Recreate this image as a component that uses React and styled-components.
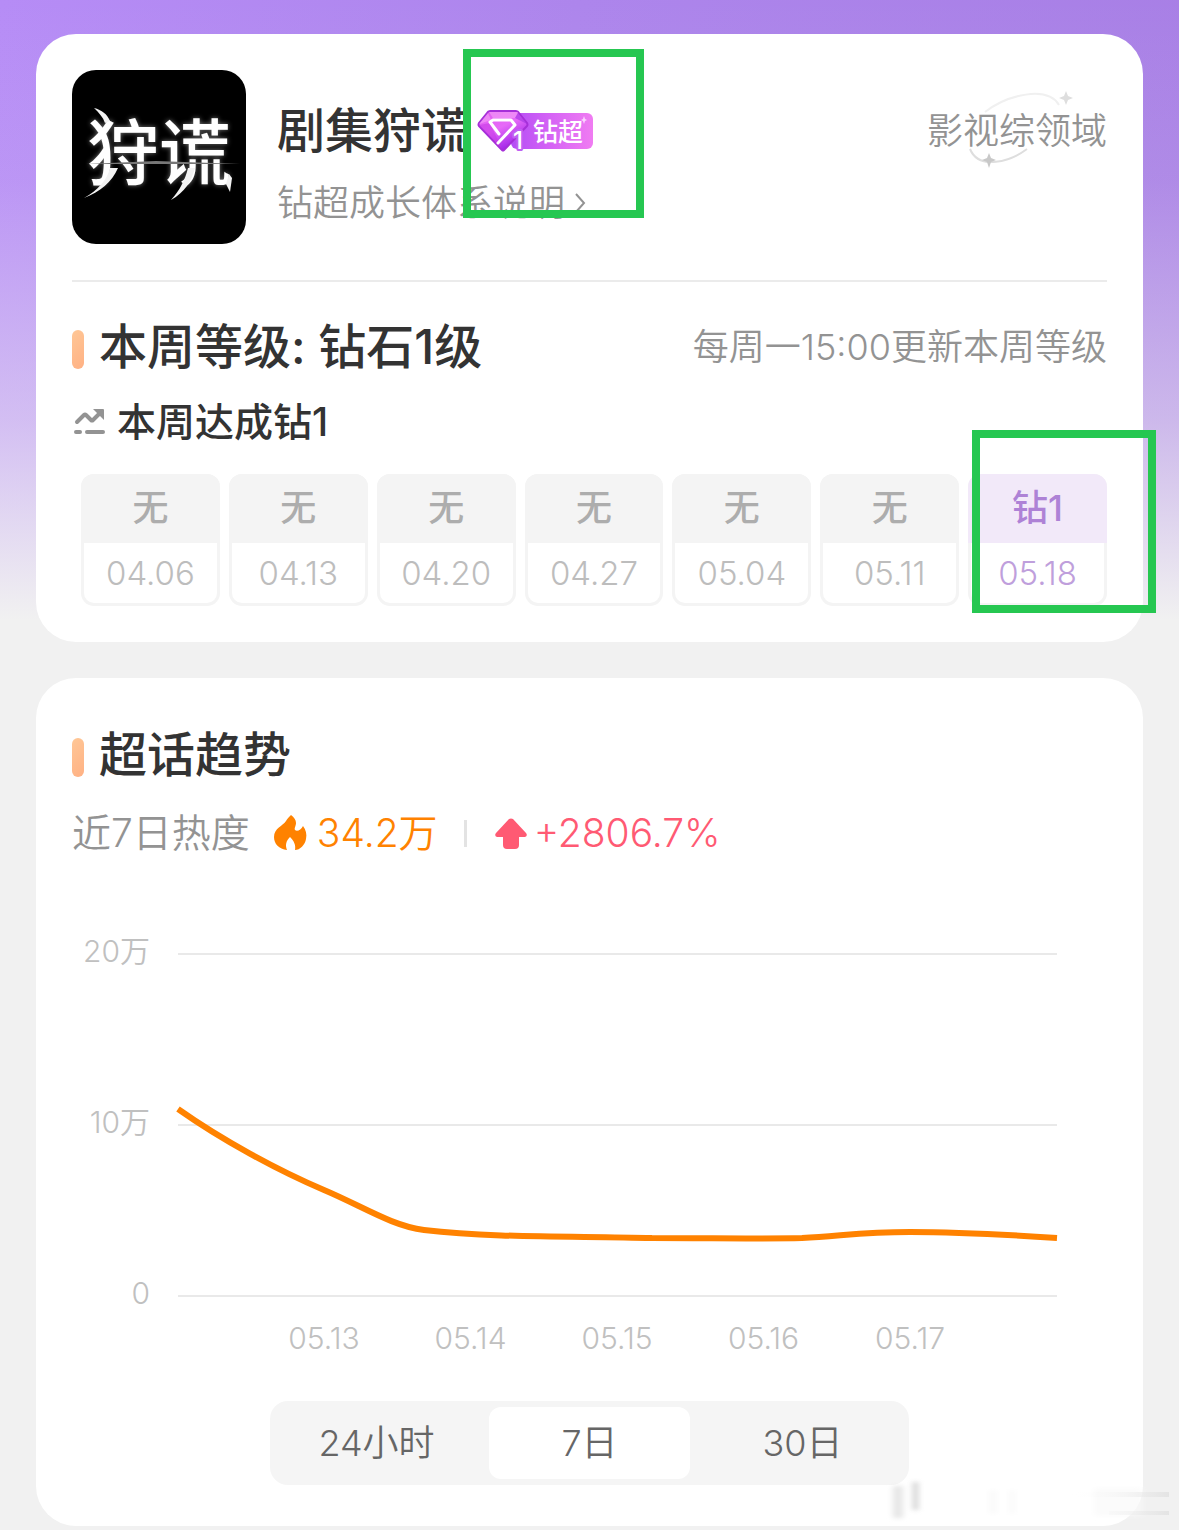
import React, { useState } from "react";
import styled, { createGlobalStyle } from "styled-components";

const GlobalStyle = createGlobalStyle`
  * {
    box-sizing: border-box;
  }
  body {
    margin: 0;
    background-color: #f1f1f1;
    font-family: Inter, "Noto Sans CJK SC", sans-serif;
    color: #333;
  }
  h1, h2, h3, p, ul {
    margin: 0;
    padding: 0;
    font-weight: 500;
  }
`;

const Page = styled.main`
  position: relative;
  display: flex;
  flex-direction: column;
  gap: 36px;
  padding: 34px 36px 4px;
  overflow: hidden;
  background:
    linear-gradient(180deg, rgba(241, 241, 241, 0) 0, rgba(241, 241, 241, 0.1) 180px, rgba(241, 241, 241, 0.5) 420px, #f1f1f1 620px),
    linear-gradient(100deg, #b68cf6 0, #ad85ec 40%, #a67de3 100%);
`;
const Card = styled.section`
  display: flex;
  flex-direction: column;
  padding: 36px;
  border-radius: 40px;
  background-color: white;
`;
const TopicHeader = styled.header`
  display: flex;
  gap: 31px;
  padding-bottom: 36px;
  border-bottom: 2px solid #ebebeb;
`;
const Cover = styled.div`
  position: relative;
  display: flex;
  align-items: center;
  justify-content: center;
  width: 174px;
  height: 174px;
  border-radius: 24px;
  background-color: black;
  color: white;
  font-size: 72px;
  line-height: 80px;
  font-weight: 500;
  text-shadow: 0 0 5px #777;
  padding-bottom: 8px;
`;
const Wisps = styled.svg`
  position: absolute;
  inset: 0;
`;
const TopicInfo = styled.div`
  display: flex;
  flex: 1;
  flex-direction: column;
  align-items: flex-start;
  gap: 12px;
  padding-top: 28px;
`;
const TitleRow = styled.div`
  display: flex;
  align-items: center;
  gap: 8px;
`;
const TopicTitle = styled.h1`
  font-size: 48px;
  line-height: 66px;
`;
const Badge = styled.span`
  position: relative;
  display: flex;
  align-items: center;
`;
const BadgeLabel = styled.span`
  height: 36px;
  margin-left: -18px;
  padding: 0 10px 0 22px;
  border-radius: 6px;
  background: linear-gradient(90deg, #b44df5, #d664f5 50%, #f07cf2);
  color: white;
  font-size: 25px;
  line-height: 38px;
  font-weight: 500;
`;
const GemIcon = styled.svg`
  position: relative;
  z-index: 1;
  overflow: visible;
`;
const BadgeSpark = styled.svg`
  position: absolute;
  top: 6px;
  right: 6px;
`;
const HelpLink = styled.a`
  display: flex;
  align-items: center;
  gap: 9px;
  color: #939393;
  font-size: 36px;
  line-height: 54px;
  font-weight: 350;
  text-decoration: none;
`;
const Field = styled.p`
  position: relative;
  align-self: flex-start;
  padding-top: 34px;
  color: #939393;
  font-size: 36px;
  line-height: 54px;
  font-weight: 350;
`;
const Orbit = styled.svg`
  position: absolute;
  top: 15px;
  left: 38px;
`;
const Highlight = styled.span`
  position: absolute;
  z-index: 2;
  inset: ${(props) => props.$inset};
  border: 8px solid #26c751;
  pointer-events: none;
`;
const HeadingRow = styled.div`
  display: flex;
  align-items: center;
  justify-content: space-between;
  padding-top: ${(props) => props.$top};
`;
const Heading = styled.h2`
  display: flex;
  align-items: center;
  gap: 15px;
  font-size: 48px;
  line-height: 66px;

  &::before {
    content: "";
    width: 12px;
    height: 39px;
    margin-top: 4px;
    border-radius: 6px;
    background: linear-gradient(135deg, #ffc796, #ffb184);
  }
`;
const Note = styled.p`
  color: #939393;
  font-size: 36px;
  line-height: 54px;
  font-weight: 350;
`;
const Reached = styled.h3`
  display: flex;
  align-items: center;
  gap: 11px;
  padding: 13px 0 23px 2px;
  font-size: 39px;
  line-height: 58px;
`;
const Weeks = styled.ul`
  display: grid;
  grid-template-columns: repeat(7, 1fr);
  gap: 9px;
  padding-left: 9px;
  list-style: none;
`;
const Week = styled.li`
  position: relative;
  border: 3px solid #f4f4f4;
  border-radius: 13px;
  color: ${(props) => (props.$active ? "#bf9fdc" : "#bdbdbd")};
  font-size: 33px;
  line-height: 60px;
  font-weight: 350;
  text-align: center;
`;
const WeekLevel = styled.div`
  margin: -3px -3px 0;
  padding-bottom: 1px;
  border-radius: 13px 13px 0 0;
  background-color: ${(props) => (props.$active ? "#f2e9f9" : "#f4f4f4")};
  color: ${(props) => (props.$active ? "#ae82d6" : "#adadad")};
  font-size: 36px;
  line-height: 68px;
  font-weight: 500;
`;
const Stats = styled.div`
  display: flex;
  align-items: center;
  padding-top: 16px;
  font-size: 39px;
  line-height: 58px;
  font-weight: 350;
`;
const StatName = styled.span`
  color: #939393;
`;
const Stat = styled.span`
  display: flex;
  align-items: center;
  gap: ${(props) => props.$gap};
  padding-left: 24px;
  color: ${(props) => props.$color};
`;
const Separator = styled.span`
  width: 3px;
  height: 27px;
  margin: 0 4px 0 26px;
  background-color: #e3e3e3;
`;
const Chart = styled.svg`
  display: block;
  width: 100%;
  margin-top: 38px;

  text {
    fill: #c0c0c0;
    font-size: 30px;
    font-weight: 350;
  }
`;
const Tabs = styled.div`
  display: flex;
  align-self: center;
  gap: 12px;
  margin: 41px 0 5px;
  padding: 6px;
  border-radius: 18px;
  background-color: #f5f5f5;
`;
const Tab = styled.button`
  width: 201px;
  padding: 0;
  border: 0;
  border-radius: 12px;
  background-color: ${(props) => (props.$active ? "white" : "transparent")};
  color: #666;
  font-family: inherit;
  font-size: 36px;
  line-height: 72px;
  font-weight: 350;
`;
const Smudge = styled.svg`
  position: absolute;
  right: 0;
  bottom: 0;
`;

const weeks = [
  { level: "无", date: "04.06" },
  { level: "无", date: "04.13" },
  { level: "无", date: "04.20" },
  { level: "无", date: "04.27" },
  { level: "无", date: "05.04" },
  { level: "无", date: "05.11" },
  { level: "钻1", date: "05.18", active: true },
];
const ranges = ["24小时", "7日", "30日"];
const gridLines = [
  { label: "20万", y: 54 },
  { label: "10万", y: 225 },
  { label: "0", y: 396 },
];
const days = ["05.13", "05.14", "05.15", "05.16", "05.17"];

const LevelBadge = () => (
  <Badge>
    <GemIcon width="52" height="42" viewBox="0 0 52 42" aria-hidden="true">
      <defs>
        <linearGradient id="gem" x1="0" y1="0" x2="0.6" y2="1">
          <stop offset="0" stopColor="#e35bf0" />
          <stop offset="0.5" stopColor="#e66af8" />
          <stop offset="1" stopColor="#9b1fe8" />
        </linearGradient>
      </defs>
      <path d="M13 1h26q2 0 3 2l8 10q1 2 0 3L27 40q-1 1-2 0L2 16q-1-1 0-3l8-10q1-2 3-2z" fill="url(#gem)" stroke="#a62fd8" strokeWidth="2" />
      <path d="M12 2l4 6h22l3-6zM2 14l12-4-3-7z" fill="#f3a0f7" opacity="0.6" />
      <path d="M50 14l-12-6 3-5z" fill="#a83be6" opacity="0.7" />
      <path d="M2 15l11-2 12 26z" fill="#c63ae6" opacity="0.6" />
      <path d="M22 24L13 12l3-2h18l4 5-17 18" fill="none" stroke="white" strokeWidth="3" strokeLinecap="round" strokeLinejoin="round" />
      <text x="36" y="39" fontSize="24" fontWeight="500" fill="white" stroke="#c060f2" strokeWidth="4" strokeLinejoin="round" paintOrder="stroke">1</text>
    </GemIcon>
    <BadgeLabel>钻超</BadgeLabel>
    <BadgeSpark width="6" height="8" viewBox="0 0 6 8" aria-hidden="true">
      <path d="M3 0l1 3 2 1-2 1-1 3-1-3-2-1 2-1z" fill="#fbd4ff" />
    </BadgeSpark>
    <Highlight $inset="-61px -51px -66px -14px" />
  </Badge>
);

const TrendIcon = () => (
  <svg width="32" height="28" viewBox="0 0 32 28" aria-hidden="true">
    <path d="M3 14l7-7q1-1 2 0l5 5q1 1 2 0l6-6" fill="none" stroke="#939393" strokeWidth="4" strokeLinecap="round" />
    <path d="M19 1h10q1 0 1 1v10z" fill="#939393" />
    <path d="M2 24h4M13 24h16" stroke="#939393" strokeWidth="4" strokeLinecap="round" />
  </svg>
);

const FireIcon = () => (
  <svg width="33" height="36" viewBox="0 0 33 36" aria-hidden="true">
    <path
      d="M17 0c3 2 5 5 5 8 0 3-2 5-1 7 2 2 6 0 8-4 3 4 4 8 3 13-1 6-6 11-11 11 1-5-1-9-5-13-4 4-5 8-3 13C5 34 0 29 0 22 0 13 9 11 12 6c1-2 3-4 5-6z"
      fill="#ff8200"
    />
  </svg>
);

const RiseIcon = () => (
  <svg width="32" height="31" viewBox="0 0 32 31" aria-hidden="true">
    <path
      d="M14 1q2-1 4 0l13 14q2 3-1 4h-6v8q0 4-4 4h-8q-4 0-4-4v-8H2q-3-1-1-4z"
      fill="#ff5a73"
    />
  </svg>
);

const TrendChart = () => (
  <Chart viewBox="0 0 1035 460" role="img" aria-label="超话趋势">
    {gridLines.map((line) => (
      <g key={line.label}>
        <path d={`M106 ${line.y}h879`} stroke="#e9e9e9" strokeWidth="2" />
        <text x="78" y={line.y + 8} textAnchor="end">{line.label}</text>
      </g>
    ))}
    {days.map((day, index) => (
      <text key={day} x={252 + index * 146.5} y="449" textAnchor="middle">{day}</text>
    ))}
    <path
      d="M106 209C150 240 205 270 252 290C290 306 320 326 352 330C420 338 500 336 580 338C640 338 690 339 730 338C770 336 790 332 838 332C890 332 940 335 985 338"
      fill="none"
      stroke="#ff8200"
      strokeWidth="6"
    />
  </Chart>
);

const App = () => {
  const [range, setRange] = useState("7日");

  return (
    <Page>
      <GlobalStyle />
      <Card>
        <TopicHeader>
          <Cover>
            狩谎
            <Wisps width="174" height="174" viewBox="0 0 174 174" aria-hidden="true">
              <defs>
                <filter id="glow"><feGaussianBlur stdDeviation="0.7" /></filter>
              </defs>
              <g filter="url(#glow)" fill="#f2f2f2">
                <path d="M12 128c16-6 28-16 34-30l-8 0c-3 12-12 22-26 30z" />
                <path d="M99 130c14-8 20-18 24-32l-7 0c-3 12-8 22-17 32z" />
                <path d="M22 38c8 2 13 6 16 13l-5 2c-2-6-6-10-11-15z" />
                <path d="M154 114l3-10 3 4-2 14z" />
                <path d="M14 94l70-3 84 3-84 0z" fill="#777" />
              </g>
            </Wisps>
          </Cover>
          <TopicInfo>
            <TitleRow>
              <TopicTitle>剧集狩谎</TopicTitle>
              <LevelBadge />
            </TitleRow>
            <HelpLink href="#help">
              钻超成长体系说明
              <svg width="12" height="20" viewBox="0 0 12 20" aria-hidden="true">
                <path d="M2 1l8 9-8 9" fill="none" stroke="#939393" strokeWidth="2" />
              </svg>
            </HelpLink>
          </TopicInfo>
          <Field>
            影视综领域
            <Orbit width="120" height="90" viewBox="0 0 120 90" aria-hidden="true">
              <path d="M20 27C42 10 82 0 94 20" fill="none" stroke="#f0f0f0" strokeWidth="2" />
              <path d="M5 64C14 86 46 76 62 64" fill="none" stroke="#dedede" strokeWidth="2" />
              <path d="M101 6l2 5 5 2-5 2-2 5-2-5-5-2 5-2z" fill="#dedede" />
              <path d="M24 68l2 5 5 2-5 2-2 6-2-6-5-2 5-2z" fill="#c8c8c8" />
            </Orbit>
          </Field>
        </TopicHeader>
        <HeadingRow $top="32px">
          <Heading>本周等级: 钻石1级</Heading>
          <Note>每周一15:00更新本周等级</Note>
        </HeadingRow>
        <Reached>
          <TrendIcon />
          本周达成钻1
        </Reached>
        <Weeks>
          {weeks.map((week) => (
            <Week key={week.date} $active={week.active}>
              <WeekLevel $active={week.active}>{week.level}</WeekLevel>
              {week.date}
              {week.active && <Highlight $inset="-47px -52px -10px 1px" />}
            </Week>
          ))}
        </Weeks>
      </Card>
      <Card>
        <HeadingRow $top="8px">
          <Heading>超话趋势</Heading>
        </HeadingRow>
        <Stats>
          <StatName>近7日热度</StatName>
          <Stat $color="#ff8200" $gap="10px">
            <FireIcon />
            34.2万
          </Stat>
          <Separator />
          <Stat $color="#ff5a73" $gap="7px">
            <RiseIcon />
            +2806.7%
          </Stat>
        </Stats>
        <TrendChart />
        <Tabs>
          {ranges.map((item) => (
            <Tab key={item} $active={item === range} onClick={() => setRange(item)}>
              {item}
            </Tab>
          ))}
        </Tabs>
      </Card>
      <Smudge width="300" height="52" viewBox="0 0 300 52" aria-hidden="true">
        <defs>
          <filter id="soft"><feGaussianBlur stdDeviation="3 2" /></filter>
          <linearGradient id="fade" x1="0" x2="1">
            <stop offset="0" stopColor="white" stopOpacity="0" />
            <stop offset="1" stopColor="#dedede" />
          </linearGradient>
        </defs>
        <g filter="url(#soft)">
          <path d="M14 8h10v32H14z" fill="#e6e6e6" />
          <path d="M34 4h5v28h-5z" fill="#cfcfcf" />
          <path d="M110 12h8v24h-8zM130 12h6v24h-6z" fill="#fafafa" />
          <path d="M215 10h48v28h-48z" fill="#fafafa" opacity="0.7" />
        </g>
        <path d="M190 14h100v5H190zM230 33h60v4h-60z" fill="url(#fade)" opacity="0.7" />
      </Smudge>
    </Page>
  );
};

export default App;
